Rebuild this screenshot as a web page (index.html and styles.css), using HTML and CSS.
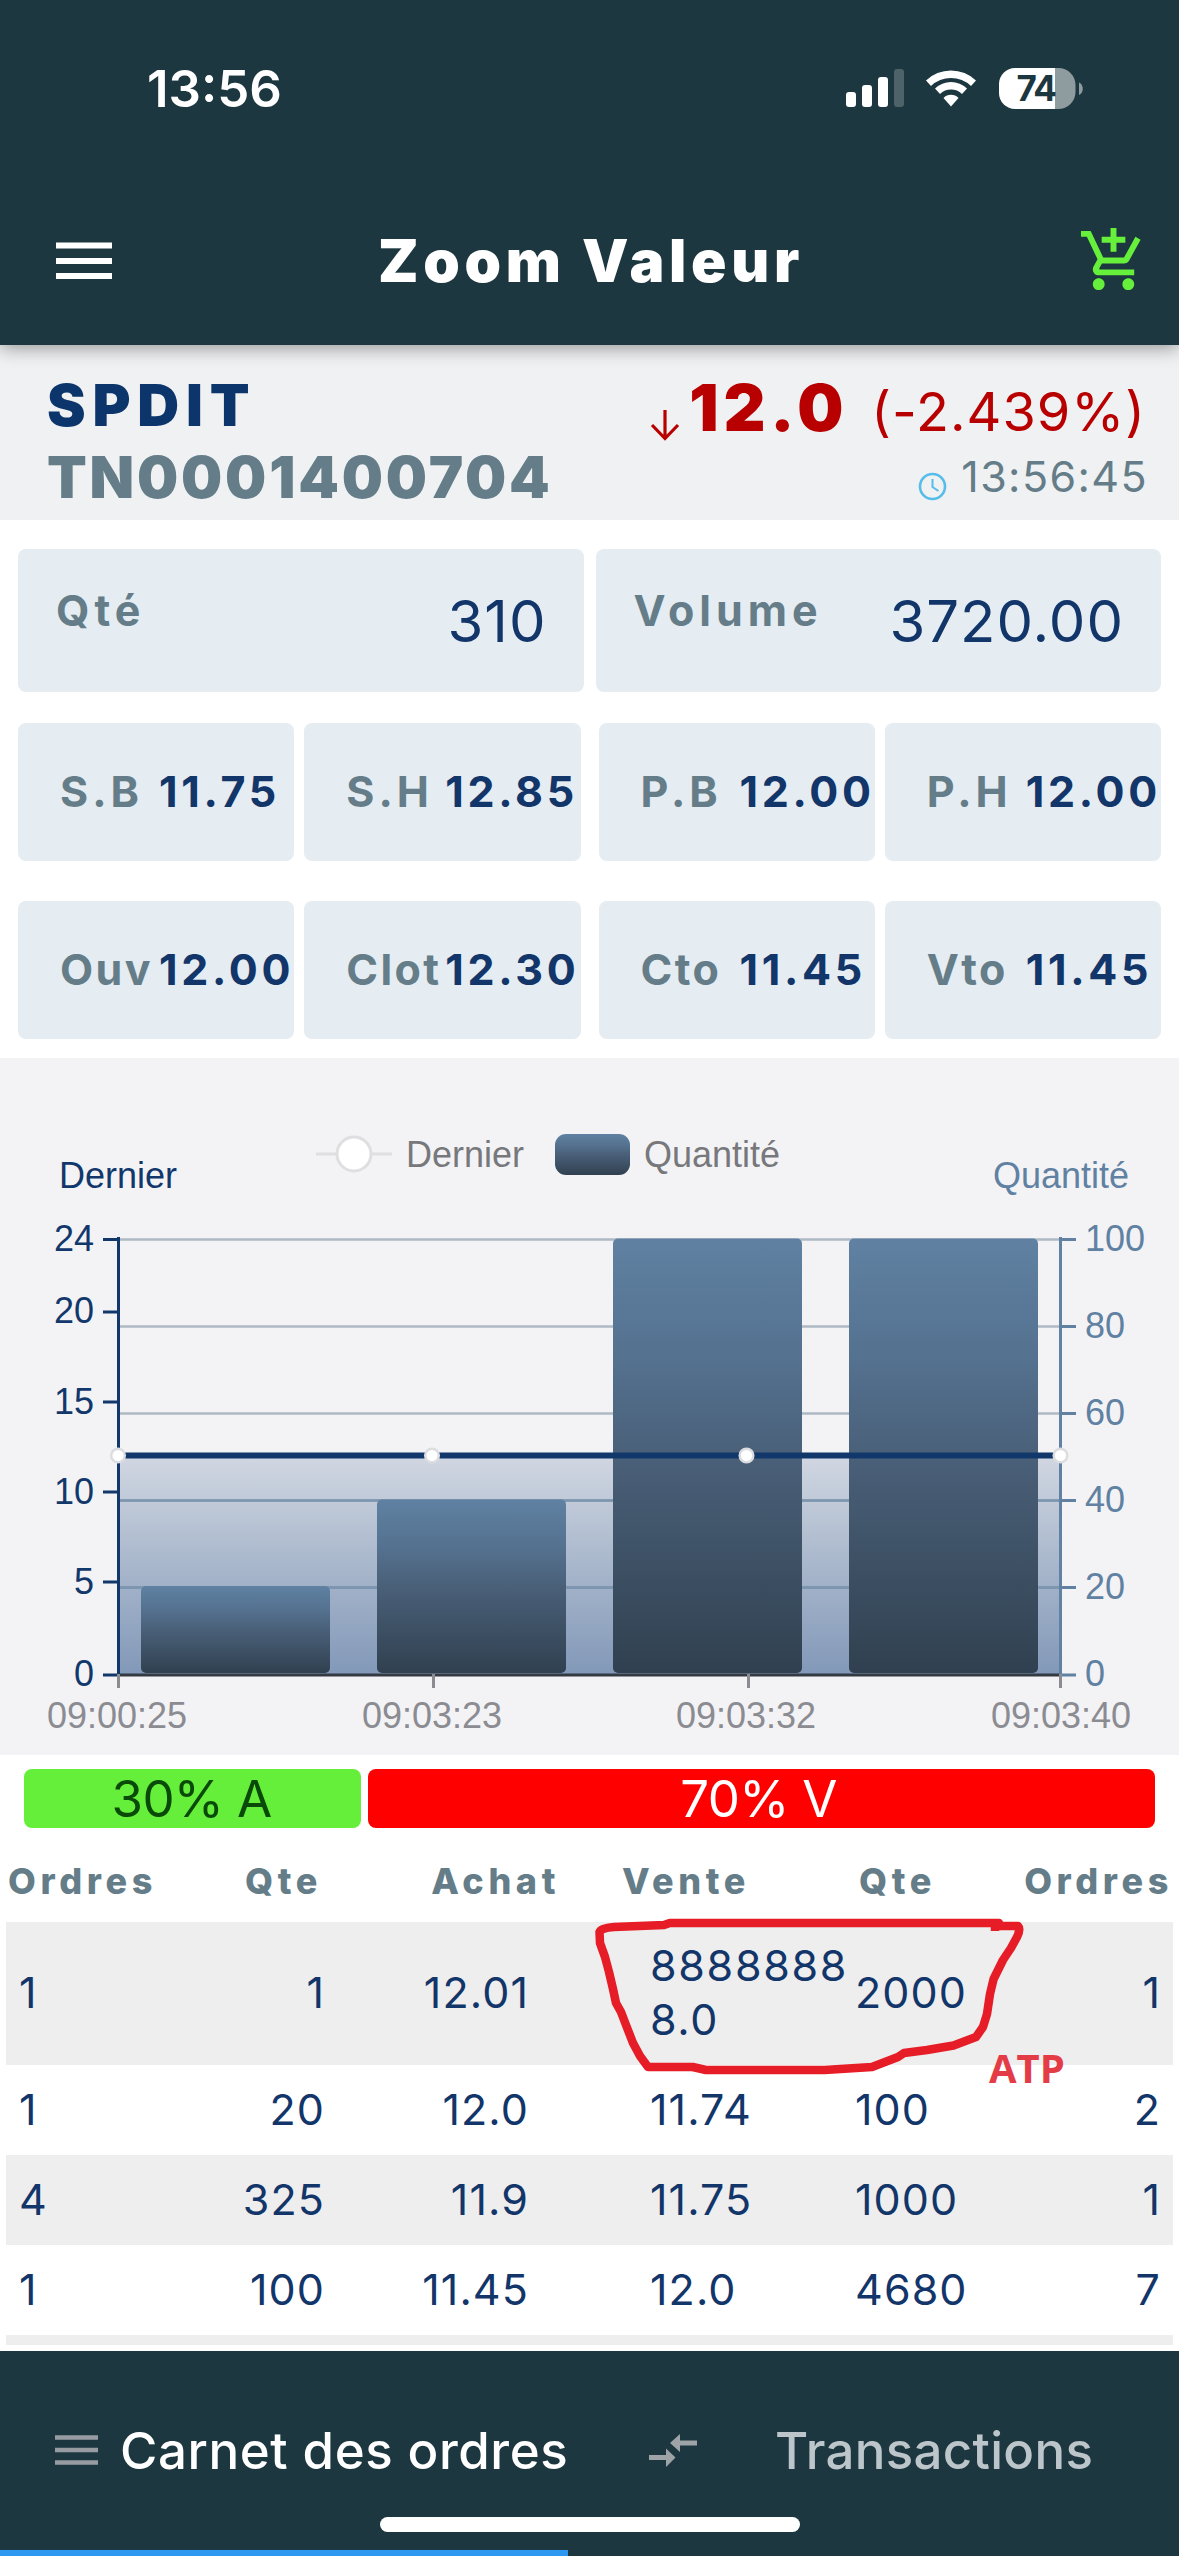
FILE: index.html
```html
<!DOCTYPE html>
<html lang="fr">
<head>
<meta charset="utf-8">
<title>Zoom Valeur</title>
<link rel="stylesheet" href="styles.css">
</head>
<body>
<header class="top">
  <div class="status">
    <span class="clock">13:56</span>
    <svg class="status-icons" width="240" height="44" viewBox="0 0 240 44">
      <g fill="#fff">
        <rect x="0" y="24" width="10" height="15" rx="3"/>
        <rect x="16" y="17" width="10" height="22" rx="3"/>
        <rect x="32" y="9" width="10" height="30" rx="3"/>
        <rect x="48" y="1" width="10" height="38" rx="3" opacity=".22"/>
        <path d="M80 12.5a36 36 0 0 1 50 0l-5 5.500a29 29 0 0 0-40 0z"/>
        <path d="M89 20.500a23 23 0 0 1 32 0l-5 5.500a16 16 0 0 0-22 0z"/>
        <path d="M97.500 30a10.500 10.500 0 0 1 15 0L105 38.500z"/>
      </g>
      <path d="M209 0h3.500a17 17 0 0 1 17 17v7a17 17 0 0 1-17 17H209z" fill="#8e9b9f"/>
      <path d="M209 0h-40a16 16 0 0 0-16 16v9a16 16 0 0 0 16 16h40z" fill="#fff"/>
      <path d="M233 14.500c5 2 5 10.500 0 12.500z" fill="#8e9b9f"/>
      <text class="battery" x="190" y="33" text-anchor="middle">74</text>
    </svg>
  </div>
  <div class="appbar">
    <svg width="56" height="38" viewBox="0 0 56 38"><path d="M0 4.500h56M0 20h56M0 35h56" stroke="#fff" stroke-width="6"/></svg>
    <h1>Zoom Valeur</h1>
    <svg class="cart" width="71" height="71" viewBox="0 0 24 24"><path fill="#66f03c" d="M11 9h2V6h3V4h-3V1h-2v3H8v2h3v3zm-4 9c-1.100 0-1.990.9-1.990 2S5.900 22 7 22s2-.9 2-2-.9-2-2-2zm10 0c-1.100 0-1.990.9-1.990 2s.89 2 1.990 2 2-.9 2-2-.9-2-2-2zm-9.830-3.250l.03-.12.9-1.630h7.450c.75 0 1.410-.41 1.750-1.030l3.860-7.010L19.420 4h-.01l-1.100 2-2.760 5H8.530l-.13-.27L6.160 6l-.95-2-.94-2H1v2h2l3.600 7.590-1.350 2.450c-.16.28-.25.61-.25.960 0 1.100.9 2 2 2h12v-2H7.420c-.13 0-.25-.11-.25-.250z"/></svg>
  </div>
</header>

<section class="info">
  <div class="name">
    <div class="ticker">SPDIT</div>
    <div class="isin">TN0001400704</div>
  </div>
  <div class="quote">
    <div class="price">
      <svg width="30" height="31" viewBox="0 0 30 31"><path d="M15 0v28M2 15l13 13.500L28 15" fill="none" stroke="#b90000" stroke-width="3.200"/></svg>
      <b>12.0</b><span>(-2.439%)</span>
    </div>
    <div class="time">
      <svg width="29" height="29" viewBox="0 0 29 29" fill="none" stroke="#55bdea"><circle cx="14.500" cy="14.500" r="12.500" stroke-width="2.600"/><path d="M14.500 7v8l6 4" stroke-width="2"/></svg>
      <span>13:56:45</span>
    </div>
  </div>
</section>

<section class="stats">
  <div class="pair totals">
    <div class="card"><span class="label">Qté</span><span class="value">310</span></div>
    <div class="card"><span class="label">Volume</span><span class="value">3720.00</span></div>
  </div>
  <div class="quad">
    <div class="duo">
      <div class="card"><span class="label">S.B</span><span class="value">11.75</span></div>
      <div class="card"><span class="label">S.H</span><span class="value">12.85</span></div>
    </div>
    <div class="duo">
      <div class="card"><span class="label">P.B</span><span class="value">12.00</span></div>
      <div class="card"><span class="label">P.H</span><span class="value">12.00</span></div>
    </div>
  </div>
  <div class="quad last">
    <div class="duo">
      <div class="card"><span class="label">Ouv</span><span class="value">12.00</span></div>
      <div class="card"><span class="label">Clot</span><span class="value">12.30</span></div>
    </div>
    <div class="duo">
      <div class="card"><span class="label">Cto</span><span class="value">11.45</span></div>
      <div class="card"><span class="label">Vto</span><span class="value">11.45</span></div>
    </div>
  </div>
</section>

<section class="chart">
<svg width="1179" height="697" viewBox="0 1058 1179 697">
  <defs>
    <linearGradient id="bar" x1="0" y1="0" x2="0" y2="1"><stop offset="0" stop-color="#6081a2"/><stop offset=".28" stop-color="#54718f"/><stop offset=".5" stop-color="#4a6079"/><stop offset=".85" stop-color="#384a5c"/><stop offset="1" stop-color="#304050"/></linearGradient>
    <linearGradient id="area" x1="0" y1="0" x2="0" y2="1"><stop offset="0" stop-color="#103a70" stop-opacity=".15"/><stop offset="1" stop-color="#1a4580" stop-opacity=".52"/></linearGradient>
  </defs>
  <g class="legend">
    <path d="M316 1154h76" stroke="#dfdfe1" stroke-width="3"/>
    <circle cx="354" cy="1154" r="17" fill="#fff" stroke="#dfdfe1" stroke-width="3"/>
    <text x="406" y="1167">Dernier</text>
    <rect x="555" y="1134" width="75" height="41" rx="11" fill="url(#bar)"/>
    <text x="644" y="1167">Quantité</text>
  </g>
  <g class="axis-left"><text x="118" y="1188" text-anchor="middle">Dernier</text></g>
  <g class="axis-right"><text x="1061" y="1188" text-anchor="middle">Quantité</text></g>
  <path d="M118 1239.500h942M118 1326.500h942M118 1413.500h942M118 1500.500h942M118 1587.500h942" stroke="#aebac3" stroke-width="2.500"/>
  <path d="M118 1455.500h942V1675H118z" fill="url(#area)"/>
  <path d="M118 1500.500h942M118 1587.500h942" stroke="#7d97b1" stroke-width="2.500"/>
  <path d="M118 1675h942" stroke="#333a42" stroke-width="3"/>
  <path d="M1060.500 1237v438m0-435.500h15.500m-15.500 87h15.500m-15.500 87h15.500m-15.500 87h15.500m-15.500 87h15.500m-15.500 87.500h15.500" stroke="#6081a2" stroke-width="3" fill="none"/>
  <path d="M118.500 1237v438M103 1239.500h15M103 1312h15M103 1402h15M103 1492h15M103 1582h15M103 1675h15" stroke="#12386b" stroke-width="3" fill="none"/>
  <g fill="url(#bar)">
    <rect x="141" y="1586" width="189" height="87" rx="5"/>
    <rect x="377" y="1499.500" width="189" height="173.500" rx="5"/>
    <rect x="613" y="1238.500" width="189" height="434.500" rx="5"/>
    <rect x="849" y="1238.500" width="189" height="434.500" rx="5"/>
  </g>
  <path d="M118.500 1674v14M433.500 1674v14M748.500 1674v14M1060.500 1674v14" stroke="#8b8c92" stroke-width="3"/>
  <path d="M118 1455.500h942" stroke="#12386b" stroke-width="6"/>
  <g fill="#fff" stroke="#dcdde1" stroke-width="2.500"><circle cx="118" cy="1455.500" r="6.800"/><circle cx="432" cy="1455.500" r="6.800"/><circle cx="746.500" cy="1455.500" r="6.800"/><circle cx="1060.500" cy="1455.500" r="6.800"/></g>
  <g class="axis-left" text-anchor="end">
    <text x="94" y="1251">24</text><text x="94" y="1323">20</text><text x="94" y="1414">15</text><text x="94" y="1504">10</text><text x="94" y="1594">5</text><text x="94" y="1686">0</text>
  </g>
  <g class="axis-right">
    <text x="1085" y="1251">100</text><text x="1085" y="1338">80</text><text x="1085" y="1425">60</text><text x="1085" y="1512">40</text><text x="1085" y="1599">20</text><text x="1085" y="1686">0</text>
  </g>
  <g class="axis-time" text-anchor="middle">
    <text x="117" y="1728">09:00:25</text><text x="432" y="1728">09:03:23</text><text x="746" y="1728">09:03:32</text><text x="1061" y="1728">09:03:40</text>
  </g>
</svg>
</section>

<section class="book">
  <div class="pressure"><span class="buy">30% A</span><span class="sell">70% V</span></div>
  <div class="row head"><span>Ordres</span><span>Qte</span><span>Achat</span><span>Vente</span><span>Qte</span><span>Ordres</span></div>
  <div class="row tall"><span>1</span><span>1</span><span>12.01</span><span class="wide">8888888<br>8.0</span><span>2000</span><span>1</span></div>
  <div class="row"><span>1</span><span>20</span><span>12.0</span><span>11.74</span><span>100</span><span>2</span></div>
  <div class="row alt"><span>4</span><span>325</span><span>11.9</span><span>11.75</span><span>1000</span><span>1</span></div>
  <div class="row"><span>1</span><span>100</span><span>11.45</span><span>12.0</span><span>4680</span><span>7</span></div>
  <div class="row cut"></div>
  <svg class="note" width="500" height="200" viewBox="590 1910 500 200">
    <path d="M669.800 1923H999V1926L1018 1926C1020 1928 1019 1933 1017 1937L1011 1948L1003 1960L993.600 1979L990 1994L987 2014L983 2027L976 2037L953.500 2045.500L927 2050L904 2053L898 2057L872 2067L824.600 2070H706L692.700 2067H648L640 2056L633 2043L626 2025L621 2012L616 2003L613 1989L609 1972L605 1957L600 1943L599.500 1932Q601 1928 614 1927L664 1925ZM995 1921V1931" fill="none" stroke="#e61c26" stroke-width="8.500" stroke-linejoin="round"/>
    <text x="989" y="2083">ATP</text>
  </svg>
</section>

<footer class="tabs">
  <div class="tab-row">
    <svg width="43" height="30" viewBox="0 0 43 30"><path d="M0 2.500h43M0 15h43M0 27.500h43" stroke="#969ca2" stroke-width="4.600"/></svg>
    <span class="tab active">Carnet des ordres</span>
    <svg class="swap" width="48" height="33" viewBox="0 0 48 33"><path fill="#9da3a7" d="M48 6.500H31V0L21 9l10 9V11.500h17zM0 21h17v-6.500L26.500 23.500 17 33v-7H0z"/></svg>
    <span class="tab">Transactions</span>
  </div>
  <div class="home"></div>
  <div class="indicator"></div>
</footer>
</body>
</html>
```
FILE: styles.css
```css
* { box-sizing: border-box; }
body {
  margin: 0;
  width: 1179px;
  height: 2556px;
  overflow: hidden;
  display: flex;
  flex-direction: column;
  background: #fff;
  color: #12356a;
  font-family: Inter, "Liberation Sans", sans-serif;
  white-space: nowrap;
}
svg { display: block; flex: none; }

.top {
  flex: none;
  height: 345px;
  background: #1c373f;
  box-shadow: 0 2px 18px rgba(0, 0, 0, .42);
  z-index: 1;
}
.status {
  height: 177px;
  padding: 0 93px 0 147px;
  display: flex;
  align-items: center;
  justify-content: space-between;
  color: #fff;
}
.clock { font-size: 51px; font-weight: 600; }
.status-icons { margin-top: 2px; }
.battery { font: 700 35px Inter, sans-serif; fill: #1c373f; letter-spacing: -1.5px; }
.appbar {
  height: 168px;
  padding: 0 30px 2px 56px;
  display: flex;
  align-items: center;
  justify-content: space-between;
  color: #fff;
}
.appbar h1 {
  margin: 0 0 0 -8px;
  font-size: 58.5px;
  font-weight: 900;
  letter-spacing: 4.7px;
}

.info {
  flex: none;
  height: 175px;
  display: flex;
  justify-content: space-between;
  background: #eff1f2;
  padding: 0 30px 0 47px;
}
.name { padding-top: 24px; font-size: 58px; font-weight: 900; line-height: 72px; }
.ticker { color: #0c366b; letter-spacing: 6.8px; }
.isin { color: #647d88; letter-spacing: 2.8px; }
.quote { padding-top: 29px; color: #b90000; }
.price {
  height: 68px;
  line-height: 68px;
  display: flex;
  align-items: baseline;
  justify-content: flex-end;
  padding-right: 3px;
}
.price svg { margin: 0 9px -10px 0; transform: translateY(10px); }
.price b { font-size: 65px; font-weight: 900; letter-spacing: 4.8px; }
.price span { font-size: 54px; margin-left: 23px; letter-spacing: 1px; }
.time {
  height: 68px;
  display: flex;
  align-items: center;
  justify-content: flex-end;
  padding-right: 1px;
  color: #647d88;
  font-size: 43px;
  letter-spacing: 1.4px;
}
.time svg { margin: 21px 14px 0 0; }

.stats { flex: none; height: 538px; padding: 29px 18px 0; }
.card {
  flex: 1;
  display: flex;
  align-items: center;
  background: #e5ecf2;
  border-radius: 8px;
}
.pair { display: flex; gap: 12px; height: 143px; }
.quad { display: flex; gap: 18px; height: 138px; margin-top: 31px; }
.quad.last { margin-top: 40px; }
.duo { flex: 1; display: flex; gap: 10px; }
.duo .card { width: 0; padding-bottom: 2px; }
.label { color: #647d88; font-size: 43px; font-weight: 700; letter-spacing: 4px; }
.value { font-size: 43px; font-weight: 700; letter-spacing: 3.7px; color: #12356a; }
.totals .card { justify-content: space-between; padding: 0 37px 0 38px; }
.totals .label { padding-bottom: 21px; letter-spacing: 5px; }
.totals .value { font-size: 58px; font-weight: 400; letter-spacing: 1px; }
.duo .label { width: 99px; margin-left: 42px; }
.quad.last .label { letter-spacing: 2.4px; }

.chart { flex: none; height: 697px; background: #f3f3f6; }
.chart text { font: 36px "Liberation Sans", Arial, sans-serif; }
.legend text { fill: #77787c; }
.axis-left text { fill: #12386b; }
.axis-right text { fill: #6081a2; }
.axis-time text { fill: #8b8c92; }

.book { position: relative; flex: none; height: 596px; overflow: hidden; }
.pressure {
  display: flex;
  gap: 7px;
  height: 59px;
  margin: 14px 24px 0;
  line-height: 59px;
  font-size: 51px;
  letter-spacing: -.7px;
  text-align: center;
}
.buy { width: 337px; padding-right: 2px; border-radius: 8px; background: #65ef3a; color: #0a4a08; }
.sell { flex: 1; padding-right: 6px; border-radius: 8px; background: #fe0000; color: #fff; }
.row {
  display: grid;
  grid-template-columns: 138px 168px 204px 326px 150px 1fr;
  align-items: center;
  height: 90px;
  margin: 0 6px;
  padding: 0 12px 2px 13px;
  font-size: 43px;
  line-height: 54px;
  letter-spacing: 1.1px;
}
.row span:nth-child(2), .row span:nth-child(3), .row span:nth-child(6) { text-align: right; }
.row span:nth-child(4) { padding-left: 121px; }
.row .wide { letter-spacing: 1.7px; }
.row.head {
  height: 93.5px;
  padding: 12px 0 0 2px;
  grid-template-columns: 152px 162px 238px 299px 150px 1fr;
  color: #647d88;
  font-size: 36px;
  font-weight: 800;
  letter-spacing: 4.6px;
}
.row.head span:nth-child(4) { padding-left: 62px; }
.row.tall { height: 143px; background: #eee; }
.row.alt, .row.cut { background: #eee; }
.row.cut { height: 10px; }

/* Hand-drawn annotation over the order book */
.note { position: absolute; left: 590px; top: 155px; }
.note text { font: 700 40px "Open Sans", sans-serif; fill: #e43c46; }

.tabs {
  flex: none;
  height: 205px;
  display: flex;
  flex-direction: column;
  background: #1c373f;
}
.tab-row {
  height: 166px;
  padding: 32px 0 0 55px;
  display: flex;
  align-items: center;
}
.tab { font-size: 51px; font-weight: 500; color: #bcc6ca; margin-left: 78px; letter-spacing: .3px; }
.tab.active { color: #fff; margin-left: 22px; letter-spacing: .6px; width: 529px; }
.home { width: 420px; height: 15px; margin: 0 auto; border-radius: 8px; background: #fff; }
.indicator { width: 568px; height: 6px; margin-top: auto; background: #2c98f0; }
```
